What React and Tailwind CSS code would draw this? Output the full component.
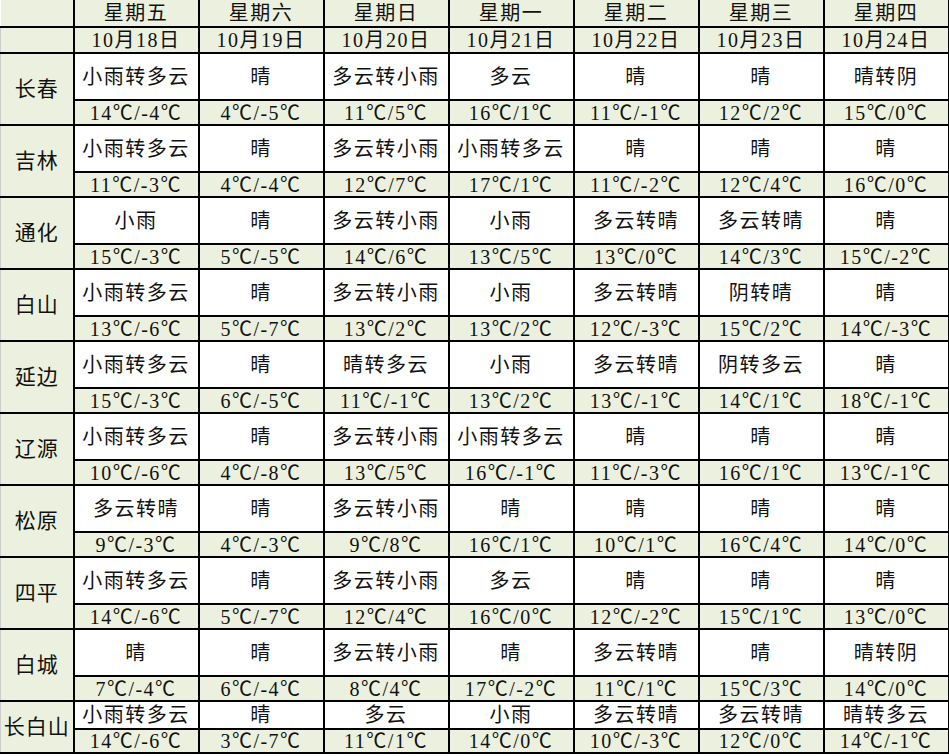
import React from 'react';

const DAYS = ['星期五', '星期六', '星期日', '星期一', '星期二', '星期三', '星期四'];
const DATES = ['10月18日', '10月19日', '10月20日', '10月21日', '10月22日', '10月23日', '10月24日'];

const ROWS = [
  { city: '长春', w: ['小雨转多云', '晴', '多云转小雨', '多云', '晴', '晴', '晴转阴'], t: ['14℃/-4℃', '4℃/-5℃', '11℃/5℃', '16℃/1℃', '11℃/-1℃', '12℃/2℃', '15℃/0℃'] },
  { city: '吉林', w: ['小雨转多云', '晴', '多云转小雨', '小雨转多云', '晴', '晴', '晴'], t: ['11℃/-3℃', '4℃/-4℃', '12℃/7℃', '17℃/1℃', '11℃/-2℃', '12℃/4℃', '16℃/0℃'] },
  { city: '通化', w: ['小雨', '晴', '多云转小雨', '小雨', '多云转晴', '多云转晴', '晴'], t: ['15℃/-3℃', '5℃/-5℃', '14℃/6℃', '13℃/5℃', '13℃/0℃', '14℃/3℃', '15℃/-2℃'] },
  { city: '白山', w: ['小雨转多云', '晴', '多云转小雨', '小雨', '多云转晴', '阴转晴', '晴'], t: ['13℃/-6℃', '5℃/-7℃', '13℃/2℃', '13℃/2℃', '12℃/-3℃', '15℃/2℃', '14℃/-3℃'] },
  { city: '延边', w: ['小雨转多云', '晴', '晴转多云', '小雨', '多云转晴', '阴转多云', '晴'], t: ['15℃/-3℃', '6℃/-5℃', '11℃/-1℃', '13℃/2℃', '13℃/-1℃', '14℃/1℃', '18℃/-1℃'] },
  { city: '辽源', w: ['小雨转多云', '晴', '多云转小雨', '小雨转多云', '晴', '晴', '晴'], t: ['10℃/-6℃', '4℃/-8℃', '13℃/5℃', '16℃/-1℃', '11℃/-3℃', '16℃/1℃', '13℃/-1℃'] },
  { city: '松原', w: ['多云转晴', '晴', '多云转小雨', '晴', '晴', '晴', '晴'], t: ['9℃/-3℃', '4℃/-3℃', '9℃/8℃', '16℃/1℃', '10℃/1℃', '16℃/4℃', '14℃/0℃'] },
  { city: '四平', w: ['小雨转多云', '晴', '多云转小雨', '多云', '晴', '晴', '晴'], t: ['14℃/-6℃', '5℃/-7℃', '12℃/4℃', '16℃/0℃', '12℃/-2℃', '15℃/1℃', '13℃/0℃'] },
  { city: '白城', w: ['晴', '晴', '多云转小雨', '晴', '多云转晴', '晴', '晴转阴'], t: ['7℃/-4℃', '6℃/-4℃', '8℃/4℃', '17℃/-2℃', '11℃/1℃', '15℃/3℃', '14℃/0℃'] },
  { city: '长白山', w: ['小雨转多云', '晴', '多云', '小雨', '多云转晴', '多云转晴', '晴转多云'], t: ['14℃/-6℃', '3℃/-7℃', '11℃/1℃', '14℃/0℃', '10℃/-3℃', '12℃/0℃', '14℃/-1℃'], short: true },
];

const cell = 'border-2 border-black text-center align-middle p-0 leading-none whitespace-nowrap tracking-[1.5px]';

export default function App() {
  return (
    <div className="bg-white w-[949px] h-[756px] overflow-hidden text-[20px] text-[#111]" style={{ fontFamily: '"Liberation Serif", "Noto Sans CJK SC", serif' }}>
      <table className="table-fixed border-collapse w-[948px]">
        <colgroup>
          <col className="w-[73px]" />
          {DAYS.map((d) => <col key={d} className="w-[125px]" />)}
        </colgroup>
        <tbody>
          <tr className="h-[27px] bg-[#ebf1de]">
            <td className={`${cell} border-t-0 border-l-0 border-l border-l-[#ccc]`} />
            {DAYS.map((d) => <td key={d} className={`${cell} border-t-0`}>{d}</td>)}
          </tr>
          <tr className="h-[26px] bg-[#ebf1de]">
            <td className={`${cell} border-l border-l-[#ccc]`} />
            {DATES.map((d) => <td key={d} className={cell}>{d}</td>)}
          </tr>
          {ROWS.map((r) => (
            <React.Fragment key={r.city}>
              <tr className={r.short ? 'h-[28px]' : 'h-[47px]'}>
                <td rowSpan={2} className={`${cell} border-l border-l-[#ccc] bg-[#ebf1de] text-[21px] tracking-[1px]`}>{r.city}</td>
                {r.w.map((x, i) => <td key={i} className={`${cell} bg-white`}>{x}</td>)}
              </tr>
              <tr className={r.short ? 'h-[24px] bg-[#ebf1de]' : 'h-[25px] bg-[#ebf1de]'}>
                {r.t.map((x, i) => <td key={i} className={cell}>{x}</td>)}
              </tr>
            </React.Fragment>
          ))}
        </tbody>
      </table>
    </div>
  );
}
